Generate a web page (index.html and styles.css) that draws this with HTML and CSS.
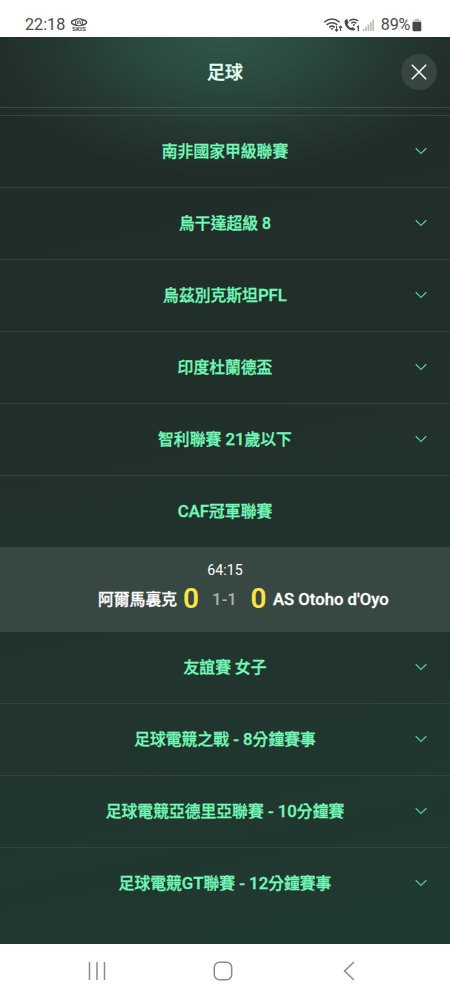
FILE: index.html
```html
<!DOCTYPE html>
<html lang="zh-Hant">
<head>
<meta charset="utf-8">
<meta name="viewport" content="width=device-width, initial-scale=1">
<title>足球</title>
<link rel="stylesheet" href="styles.css">
</head>
<body>
<div class="phone">
  <div class="status">
    <span class="clock">22:18</span>
    <svg class="skis" width="18" height="14" viewBox="0 0 18 14">
      <ellipse cx="9" cy="4.3" rx="7.6" ry="3" fill="none" stroke="#505050" stroke-width="1.6"/>
      <circle cx="9" cy="4.3" r="3.5" fill="#fff" stroke="#505050" stroke-width="1.1"/>
      <path d="M7.5 6V3.2h3V6M9 2.4V6" fill="none" stroke="#505050" stroke-width=".8"/>
      <text x="9" y="13.2" text-anchor="middle" textLength="14" lengthAdjust="spacingAndGlyphs">SKIS</text>
    </svg>
    <span class="grow"></span>
    <svg class="signals" width="54" height="16" viewBox="0 0 54 16" fill="none" stroke="#4c4c4c">
      <path d="M.2 5.2Q8-1 15.6 5.2M2.6 7.8Q8 3.5 13.3 7.8M5.2 10.3Q8 8 10.8 10.3" stroke-width="1.5"/>
      <path d="M6.3 11.2L8 13.2L9.7 11.2Z" fill="#4c4c4c" stroke="none"/>
      <path d="M12.6 9v5M10.9 12.4L12.6 14.3L14.3 12.4M16.5 14V9M15 10.8L16.5 9L18.1 10.8" stroke-width="1.1"/>
      <path d="M21.6 2.6Q19.7 4.3 21.3 8.2Q23.7 13 28.5 13.6Q30.5 13.8 31.5 12.2L28.6 9.9L26.7 11Q24.3 9.8 23.5 7.2L24.7 5.8L23.3 2.3Q22.3 2 21.6 2.6Z" fill="#4c4c4c" stroke="none"/>
      <path d="M25.3 4Q29.6 .6 34.2 4M27.2 6.2Q29.8 4.2 32.4 6.2" stroke-width="1.4"/>
      <circle cx="29.8" cy="8" r="1" fill="#4c4c4c" stroke="none"/>
      <path d="M32.9 10l1.5-1v5.3" stroke-width="1.2"/>
      <path d="M39.6 14v-2.2M42 14V9.8M44.4 14V7.4M46.8 14V5M49.2 14V2.5" stroke="#bdbdbd" stroke-width="1.7"/>
    </svg>
    <span class="percent">89%</span>
    <svg class="battery" width="10" height="14" viewBox="0 0 10 14">
      <path d="M3 .8h4v1.5H9V5H.6V2.3H3z" fill="#bdbdbd"/>
      <rect x=".5" y="4" width="8.8" height="9.2" rx="1.3" fill="#454545"/>
    </svg>
  </div>

  <main class="sheet">
    <header class="title-bar">
      <h1>足球</h1>
      <button class="close" aria-label="關閉">
        <svg width="16" height="16" viewBox="0 0 16 16"><path d="M.8.8l14.4 14.4M15.2.8L.8 15.2" stroke="#fff" stroke-width="1.5"/></svg>
      </button>
    </header>
    <div class="strip"></div>

    <section class="league"><h2>南非國家甲級聯賽</h2><svg class="chevron" viewBox="0 0 12 8"><path d="M.7 1.2L6 6.4L11.3 1.2"/></svg></section>
    <section class="league"><h2>烏干達超級 8</h2><svg class="chevron" viewBox="0 0 12 8"><path d="M.7 1.2L6 6.4L11.3 1.2"/></svg></section>
    <section class="league"><h2>烏茲別克斯坦<span class="latin">PFL</span></h2><svg class="chevron" viewBox="0 0 12 8"><path d="M.7 1.2L6 6.4L11.3 1.2"/></svg></section>
    <section class="league"><h2>印度杜蘭德盃</h2><svg class="chevron" viewBox="0 0 12 8"><path d="M.7 1.2L6 6.4L11.3 1.2"/></svg></section>
    <section class="league"><h2>智利聯賽<span class="latin"> 21</span>歲以下</h2><svg class="chevron" viewBox="0 0 12 8"><path d="M.7 1.2L6 6.4L11.3 1.2"/></svg></section>
    <section class="league open"><h2><span class="latin">CAF</span>冠軍聯賽</h2></section>

    <article class="match">
      <time>64:15</time>
      <div class="score-line">
        <span class="team home">阿爾馬裏克</span>
        <b class="goals">0</b>
        <span class="half">1-1</span>
        <b class="goals">0</b>
        <span class="team away">AS Otoho d'Oyo</span>
      </div>
    </article>

    <section class="league"><h2>友誼賽 女子</h2><svg class="chevron" viewBox="0 0 12 8"><path d="M.7 1.2L6 6.4L11.3 1.2"/></svg></section>
    <section class="league"><h2>足球電競之戰<span class="latin"> - 8</span>分鐘賽事</h2><svg class="chevron" viewBox="0 0 12 8"><path d="M.7 1.2L6 6.4L11.3 1.2"/></svg></section>
    <section class="league"><h2>足球電競亞德里亞聯賽<span class="latin"> - 10</span>分鐘賽</h2><svg class="chevron" viewBox="0 0 12 8"><path d="M.7 1.2L6 6.4L11.3 1.2"/></svg></section>
    <section class="league open"><h2>足球電競<span class="latin">GT</span>聯賽<span class="latin"> - 12</span>分鐘賽事</h2><svg class="chevron" viewBox="0 0 12 8"><path d="M.7 1.2L6 6.4L11.3 1.2"/></svg></section>
  </main>

  <nav class="nav">
    <svg width="20" height="20" viewBox="0 0 20 20"><path d="M2.5 1v18M10 1v18M17.5 1v18"/></svg>
    <svg width="20" height="20" viewBox="0 0 20 20"><rect x="1.3" y="1.3" width="17.4" height="17.4" rx="5.2"/></svg>
    <svg width="20" height="20" viewBox="0 0 20 20"><path d="M15 1L5.5 10L15 19"/></svg>
  </nav>
</div>
</body>
</html>
```
FILE: styles.css
```css
* { box-sizing: border-box; }

body {
  margin: 0;
  background: #fff;
  font-family: Roboto, "Noto Sans CJK TC", sans-serif;
}

.phone {
  width: 450px;
  height: 1000px;
  display: flex;
  flex-direction: column;
  overflow: hidden;
}

.status {
  height: 37px;
  flex: none;
  display: flex;
  align-items: center;
  padding: 12px 28px 0 25px;
  color: #4c4c4c;
  font-size: 16.2px;
  line-height: 24px;
}
.clock { width: 45px; }
.skis text { font: 700 5.5px Roboto, sans-serif; fill: #505050; }
.grow { flex: 1; }
.signals { margin-right: 3px; }
.percent { margin-right: 2px; letter-spacing: -.3px; }

.sheet {
  height: 907px;
  flex: none;
  background:
    radial-gradient(ellipse 250px 140px at 50% 0, rgba(48, 88, 72, .95), rgba(48, 88, 72, .68) 35%, rgba(48, 88, 72, .26) 68%, rgba(48, 88, 72, 0)),
    linear-gradient(168deg, #202c29 8%, #212f2b 38%, #21362f 78%, #203a30);
}

.title-bar {
  height: 70px;
  display: grid;
  grid-template-columns: 1fr auto 1fr;
  align-items: center;
  padding: 0 13px;
}
.title-bar h1 {
  grid-column: 2;
  margin: 0;
  padding-bottom: 2px;
  color: #e2fff2;
  font-size: 18px;
  font-weight: 500;
  -webkit-text-stroke: .35px currentColor;
}
.close {
  justify-self: end;
  width: 36px;
  height: 36px;
  display: grid;
  place-items: center;
  padding: 0;
  border: 0;
  border-radius: 50%;
  background: #384642;
}
.close svg { display: block; }

.strip {
  height: 8px;
  border-top: 1px solid rgba(255, 255, 255, .13);
}
.league {
  height: 72px;
  display: grid;
  grid-template-columns: 1fr auto 1fr;
  align-items: center;
  padding: 0 23px 1px;
  border-bottom: 1px solid #33443f;
}
.strip + .league {
  height: 73px;
  border-top: 1px solid #344740;
}
.league.open {
  height: 71px;
  border-bottom: 0;
}
.league h2 {
  grid-column: 2;
  margin: 0;
  padding-top: 2px;
  color: #73f9b8;
  font-size: 15.8px;
  line-height: 24px;
  font-weight: 500;
  -webkit-text-stroke: .3px currentColor;
  white-space: nowrap;
}
.latin {
  font-size: 16.8px;
  line-height: 1;
}
.chevron {
  justify-self: end;
  width: 12px;
  height: 8px;
  fill: none;
  stroke: #55c891;
  stroke-width: 1.3;
}

.match {
  height: 85px;
  padding-top: 13px;
  background: #374843;
  color: #fff;
}
.match time {
  display: block;
  text-align: center;
  font-size: 14.2px;
  line-height: 20px;
}
.score-line {
  height: 38px;
  display: grid;
  grid-template-columns: 177px 28px 39px 29px 1fr;
  align-items: center;
  text-align: center;
}
.team {
  font-size: 15.8px;
  font-weight: 500;
  -webkit-text-stroke: .3px currentColor;
  text-align: left;
  white-space: nowrap;
}
.team.home {
  text-align: right;
  padding-bottom: 1px;
}
.team.away { font-size: 16.7px; }
.goals {
  color: #ffe245;
  font-size: 28px;
  line-height: 34px;
  font-weight: 600;
}
.half {
  color: #aab1af;
  font-size: 16.8px;
  font-weight: 500;
}

.nav {
  flex: 1;
  display: flex;
  justify-content: space-between;
  align-items: center;
  padding: 0 91px 2px 87px;
}
.nav svg {
  fill: none;
  stroke: #8b8b8b;
  stroke-width: 1.5;
}
```
